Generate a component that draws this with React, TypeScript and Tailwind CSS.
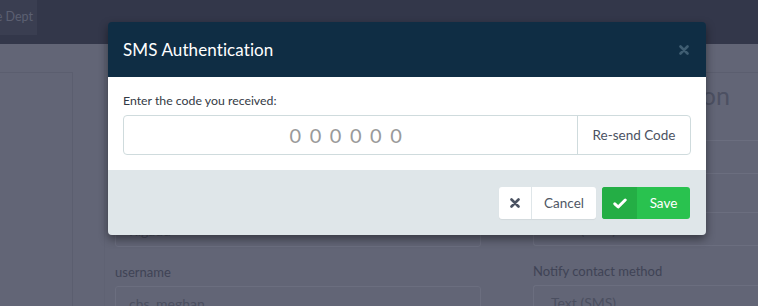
import React from "react";

const font = { fontFamily: "Lato, 'Noto Sans', sans-serif" };

export default function App() {
  return (
    <div className="relative w-[758px] h-[306px] overflow-hidden bg-[#626576]" style={font}>
      {/* top bar */}
      <div className="h-[44px] bg-[#33374a] flex items-start">
        <div className="w-[37px] h-[35px] bg-[#3a3e51] overflow-hidden flex justify-end items-center pr-[4px]">
          <span className="whitespace-nowrap text-[12.5px] text-[#5c6072]">Service Dept</span>
        </div>
      </div>
      {/* page */}
      <div className="flex items-stretch">
        <div className="w-[73px] shrink-0 mt-[28px] h-[300px] border-t border-r border-[#5b5e6f]" />
        <div className="w-[31px] shrink-0" />
        <div className="flex-1 flex border-l border-[#5f6273] pl-[10px]">
          <div className="w-[366px] shrink-0 flex flex-col pt-[169px]">
            <div className="shrink-0 h-[34px] border border-[#6b6e7f] rounded-[3px] flex items-center px-[13px] text-[14px] text-[#4b4f60]">Rigaud</div>
            <div className="shrink-0 mt-[15px] text-[13px] leading-[20px] text-[#3f4355]">username</div>
            <div className="shrink-0 mt-[4px] h-[34px] border border-[#6b6e7f] rounded-[3px] flex items-center px-[13px] text-[14px] text-[#4b4f60]">chs_meghan</div>
          </div>
          <div className="flex-1 ml-[36px] flex flex-col">
            <div className="shrink-0 mt-[28px] border-t border-[#5b5e6f] h-[46px] flex items-center justify-end pr-[28px] text-[25px] text-[#4c5062] whitespace-nowrap">
              Notification
            </div>
            <div className="shrink-0 ml-[16px] mt-[22px] h-[34px] border border-[#6b6e7f] rounded-l-[3px] border-r-0" />
            <div className="shrink-0 ml-[16px] mt-[38px] h-[34px] border border-[#6b6e7f] rounded-l-[3px] border-r-0 flex items-center px-[17px] text-[14px] text-[#4b4f60]">Text (SMS)</div>
            <div className="shrink-0 ml-[16px] mt-[15px] text-[13px] leading-[20px] text-[#3f4355]">Notify contact method</div>
            <div className="shrink-0 ml-[16px] mt-[4px] h-[34px] border border-[#6b6e7f] rounded-l-[3px] border-r-0 flex items-center px-[17px] text-[14px] text-[#4b4f60]">Text (SMS)</div>
          </div>
        </div>
      </div>

      {/* modal */}
      <div className="absolute left-[108px] top-[22px] w-[598px] rounded-[4px] overflow-hidden shadow-[0_4px_10px_rgba(0,0,0,0.45)]">
        <div className="h-[55px] bg-[#0f2d44] flex items-center justify-between pl-[15px] pr-[17px]">
          <span className="text-[17px] text-white tracking-[0.1px]">SMS Authentication</span>
          <svg width="10" height="10" viewBox="0 0 10 10" className="mt-[1px]">
            <path d="M1.5 1.5 L8.5 8.5 M8.5 1.5 L1.5 8.5" stroke="#3f5d72" strokeWidth="2.6" strokeLinecap="round" />
          </svg>
        </div>
        <div className="bg-white px-[15px] pt-[16px] pb-[15px]">
          <div className="text-[12.3px] text-[#333a44] leading-[16px]">Enter the code you received:</div>
          <div className="mt-[6px] flex h-[40px] border border-[#cfdbdd] rounded-[4px]">
            <div className="flex-1 flex items-center justify-center pr-[8px] text-[20px] text-[#9a9a9a] tracking-[1.7px]">0 0 0 0 0 0</div>
            <div className="w-[113px] border-l border-[#cfdbdd] flex items-center justify-center text-[13.5px] text-[#4b5262]">Re-send Code</div>
          </div>
        </div>
        <div className="h-[65px] bg-[#dfe6e9] flex justify-end items-start pt-[17px] pr-[16px] gap-[6px]">
          <div className="h-[32px] w-[97px] bg-white rounded-[3px] flex shadow-[0_1px_1px_rgba(0,0,0,0.06)]">
            <div className="w-[33px] border-r border-[#dfe6e9] flex items-center justify-center">
              <svg width="10" height="10" viewBox="0 0 10 10">
                <path d="M1.5 1.5 L8.5 8.5 M8.5 1.5 L1.5 8.5" stroke="#4a5261" strokeWidth="2.6" strokeLinecap="round" />
              </svg>
            </div>
            <div className="flex-1 flex items-center justify-center text-[13.5px] text-[#505765]">Cancel</div>
          </div>
          <div className="h-[32px] w-[88px] bg-[#29c24f] rounded-[3px] flex overflow-hidden">
            <div className="w-[35px] bg-[#24ae45] flex items-center justify-center">
              <svg width="14" height="11" viewBox="0 0 14 11">
                <path d="M1.8 5.8 L5.2 9 L12.2 2" stroke="white" strokeWidth="3" fill="none" strokeLinejoin="round" strokeLinecap="round" />
              </svg>
            </div>
            <div className="flex-1 flex items-center justify-center text-[13.5px] text-white">Save</div>
          </div>
        </div>
      </div>
    </div>
  );
}
